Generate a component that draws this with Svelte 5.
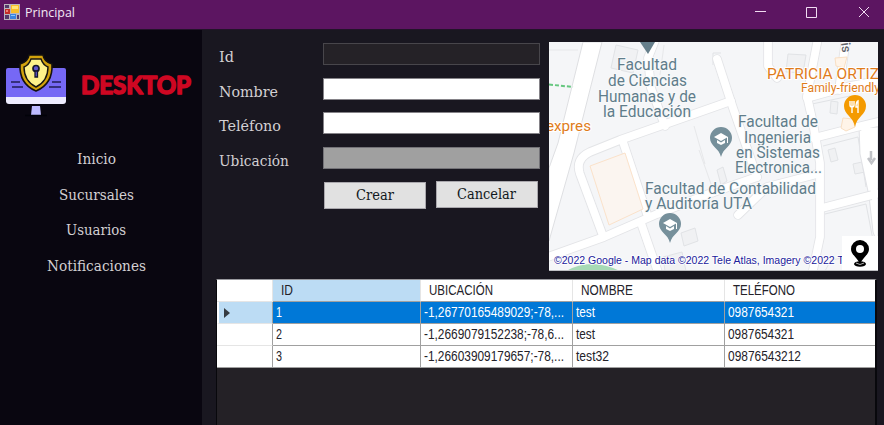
<script>
  const nav = [
    { text: 'Inicio', width: 39 },
    { text: 'Sucursales', width: 75 },
    { text: 'Usuarios', width: 60 },
    { text: 'Notificaciones', width: 99 }
  ];
  const fields = [
    { text: 'Id', width: 15, kind: 'dark' },
    { text: 'Nombre', width: 59, kind: '' },
    { text: 'Teléfono', width: 62, kind: '' },
    { text: 'Ubicación', width: 70, kind: 'gray' }
  ];
  const headers = [
    { text: 'ID', width: 12 },
    { text: 'UBICACIÓN', width: 64 },
    { text: 'NOMBRE', width: 52 },
    { text: 'TELÉFONO', width: 62 }
  ];
  const rows = [
    [['1', 6], ['-1,26770165489029;-78,...', 140], ['test', 19], ['0987654321', 66]],
    [['2', 6], ['-1,2669079152238;-78,6...', 140], ['test', 19], ['0987654321', 66]],
    [['3', 6], ['-1,26603909179657;-78,...', 140], ['test32', 33], ['09876543212', 73]]
  ];
  const roads = [
    'M545 258 L604 237 L657 214 L714 192 L757 177',
    'M603 236 L580 174 Q575 159 590 152 L620 140 L714 107 L731 101',
    'M623 142 L647 214',
    'M641 223 L659 275',
    'M656 38 L648 58 L651 88 L665 126',
    'M717 59 L733 108 L757 177',
    'M738 215 L767 187 L817 174',
    'M768 38 L768 66 L777 78',
    'M818 38 L807 96 L813 123 L820 163 L820 237 L812 275',
    'M807 98 L850 86 L882 80',
    'M846 38 L839 90',
    'M814 138 L857 127 L882 121',
    'M822 208 L880 193'
  ];
  const places = [
    ['Facultad', 617, 70, 60], ['de Ciencias', 608, 85.5, 79],
    ['Humanas y de', 598, 101.5, 98], ['la Educación', 603, 117, 88],
    ['Facultad de', 738, 127, 80], ['Ingenieria', 744, 142.5, 67],
    ['en Sistemas', 736, 158, 84], ['Electronica...', 735, 173, 87],
    ['Facultad de Contabilidad', 645, 193.5, 171], ['y Auditoría UTA', 645, 209, 107]
  ];
</script>

{#snippet fit(text, width, size, height = 20)}
  <svg class="fit" {width} {height}>
    <text x="0" y={height * 0.75} font-size={size} textLength={width} lengthAdjust="spacingAndGlyphs">{text}</text>
  </svg>
{/snippet}

{#snippet pin(x, y)}
  <g transform={`translate(${x} ${y})`}>
    <path d="M0 18 C-2 9 -11 7 -11 -1 A11 11 0 0 1 11 -1 C11 7 2 9 0 18Z" fill="#76909b" />
    <path d="M-7 -2 L0 -6 L7 -2 L0 2Z M-4 1 L0 3.5 L4 1 V4 L0 6 L-4 4Z" fill="white" />
    <path d="M6.5 -2 V4" stroke="white" />
  </g>
{/snippet}

<div class="window">
  <header>
    <svg width="16" height="16" viewBox="0 0 16 16">
      <path d="M0 0H16V16H0Z" fill="#bab5bd" />
      <path d="M1 1H5V4H1Z M1 11H5V15H1Z M13 11H15V15H13Z" fill="#54386a" />
      <path d="M7 1H15V9H7Z" fill="#f7bd29" /><path d="M8 2H14V5H8Z" fill="#ffe477" />
      <path d="M1 5H6V10H1Z" fill="#c32e27" /><path d="M2 6H4V8H2Z" fill="#ee8277" />
      <path d="M6 10H12V15H6Z" fill="#3c83df" /><path d="M7 11H11V12H7Z" fill="#86c5ff" />
    </svg>
    <span class="title">{@render fit('Principal', 50, 13.2)}</span>
    <svg class="controls" width="120" height="14" viewBox="0 0 120 14" fill="none" stroke="#f1dcf2">
      <path d="M1 6.5H12" /><path d="M52.5 2.5H62.5V12.5H52.5Z" /><path d="M105 2L115 12M115 2L105 12" />
    </svg>
  </header>
  <div class="body">
    <aside>
      <div class="brand">
        <svg width="198" height="74" viewBox="0 48 198 74">
          <path d="M8 68H64Q66 68 66 70V97H6V70Q6 68 8 68Z" fill="#7668f5" />
          <path d="M6 97H66V101Q66 104 63 104H9Q6 104 6 101Z" fill="#eeecff" />
          <path d="M32 106H40L41 115H31Z" fill="#bdbaff" />
          <path d="M25 115.5H47" stroke="#020208" stroke-width="1.5" />
          <path d="M11 82H20M12 87H23M52 82H61M49 87H61" stroke="#221c55" stroke-width="1.5" />
          <path d="M29 55H43Q44 62 52 64Q53 84 36 91Q19 84 20 64Q28 62 29 55Z" fill="#d3a20c" stroke="#15120f" stroke-width="1.6" />
          <path d="M31 59H41Q43 65 48 67Q48 81 36 87Q24 81 24 67Q29 65 31 59Z" fill="#fff28b" stroke="#181510" stroke-width="1.4" />
          <circle cx="36" cy="68.5" r="3" fill="#6257cf" stroke="#17172c" stroke-width="1.7" />
          <path d="M35 71V77H37.5V71Z" fill="#6257cf" stroke="#17172c" stroke-width="1.3" />
          <text x="81" y="94" textLength="110" lengthAdjust="spacingAndGlyphs" class="logo">DESKTOP</text>
        </svg>
      </div>
      <nav>
        {#each nav as item}<a href={'#' + item.text}>{@render fit(item.text, item.width, 14)}</a>{/each}
      </nav>
    </aside>
    <main>
      <section class="top">
        <form>
          {#each fields as field}
            <div class="field">
              <span class="label">{@render fit(field.text, field.width, 14)}</span>
              <span class={['input', field.kind]}></span>
            </div>
          {/each}
          <div class="actions">
            <button type="button" class="create">{@render fit('Crear', 38, 14)}</button>
            <button type="button">{@render fit('Cancelar', 59, 14)}</button>
          </div>
        </form>
        <svg class="map" width="329" height="229" viewBox="549 42 329 229">
          <path d="M549 42H878V271H549Z" fill="#f5f6f8" />
          <g fill="#f0f1f3" stroke="#e1e3e6">
            <path d="M616 45L638 50L633 73L611 68Z" /><path d="M788 54L806 55L803 73L786 72Z" />
            <path d="M831 101L838 102L837 114L830 113Z" /><path d="M681 233L695 228L698 241L684 246Z" />
            <path d="M663 257L682 252L686 271H665Z" /><path d="M717 170L723 167L727 181L721 185Z" />
            <path d="M828 150L835 148L838 160L831 162Z" /><path d="M853 164L862 162L865 172L855 174Z" />
            <path d="M721 53H713V65" fill="none" /><path d="M812 104L850 96M823 146L858 137L866 187M825 214L866 204L874 245M825 271L831 260L843 258" fill="none" />
          </g>
          <path d="M583 42H602L574 153L549 241V168L558 143Z" fill="white" stroke="#dedfe2" />
          <path d="M859 127H878V245L873 232L869 196L860 154Z" fill="white" stroke="#e1e2e6" />
          <g fill="none" stroke-linejoin="round" stroke-linecap="round">
            {#each roads as d}<path {d} stroke="#e3e4e7" stroke-width="9.5" />{/each}
            {#each roads as d}<path {d} stroke="white" stroke-width="7.8" />{/each}
          </g>
          <path d="M861 128H877V227L871 194Z" fill="white" />
          <path d="M590 166L625 153L643 209L609 225Z" fill="#fbf5f0" stroke="#fbe2ca" />
          <path d="M835 58L847 57L844 68L836 66Z M843 118L853 119L855 127L846 131L841 128Z" fill="#fff4e8" stroke="#f9dfc3" />
          <path d="M549 84.5L573 87" stroke="#65c77f" stroke-width="2" stroke-dasharray="4 2" />
          <path d="M694 126L705 164M699 150L711 184M664 45L660 75M549 50H578" fill="none" stroke="#e7e8ea" />
          <path d="M566 271Q591 257 620 271Z" fill="#a7dab5" />
          <path d="M640 42H655L648 54Z" fill="#667f8b" />
          {@render pin(721, 139)}
          {@render pin(670, 225)}
          <path d="M855 127C853 116 844 115 844 106A11 11 0 0 1 866 106C866 115 857 116 855 127Z" fill="#f49a00" />
          <path d="M850 101V105Q850 107 852 107V113M852 101V107M854 101V105Q854 107 852 107M858 113V101Q856 102 856 107H858" stroke="white" stroke-width="1.4" fill="none" />
          <g class="places">
            {#each places as [text, x, y, width]}
              <text {x} {y} textLength={width} lengthAdjust="spacingAndGlyphs">{text}</text>
            {/each}
          </g>
          <g class="food">
            <text x="546" y="130.5" font-size="14.5" textLength="45" lengthAdjust="spacingAndGlyphs">expres</text>
            <text x="767" y="79" font-size="15.5" textLength="112" lengthAdjust="spacingAndGlyphs">PATRICIA ORTIZ</text>
            <text x="801" y="92" font-size="12.5" textLength="79" lengthAdjust="spacingAndGlyphs">Family-friendly</text>
          </g>
          <text x="841" y="43" transform="rotate(83 841 43)" font-size="13" font-weight="500" fill="#626469" font-family="Roboto">is</text>
          <path d="M871 151V160M868 158L871.5 163L875 158" stroke="#c0c2c7" stroke-width="2.5" fill="none" />
          <text x="554" y="264" font-size="10.4" textLength="298" lengthAdjust="spacingAndGlyphs" class="copyright">©2022 Google - Map data ©2022 Tele Atlas, Imagery ©2022 Ter</text>
          <path d="M842 236H878V271H842Z" fill="white" />
          <ellipse cx="860" cy="264" rx="6" ry="2.8" />
          <path d="M860 264C858 258 851 255 851 249A9 9 0 0 1 869 249C869 255 862 258 860 264Z" />
          <circle cx="860" cy="249" r="4" fill="white" />
          <path d="M856 263Q860 266 864 263" stroke="white" stroke-width=".7" fill="none" />
          <path d="M549 270.5H878" stroke="#bfc0c4" />
        </svg>
      </section>
      <section class="grid">
        <div class="row head">
          <span class="cell marker"></span>
          {#each headers as header, i}<span class={['cell', { chosen: i === 0 }]}>{@render fit(header.text, header.width, 14)}</span>{/each}
        </div>
        {#each rows as row, i}
          <div class={['row', { selected: i === 0 }]}>
            <span class="cell marker">{#if i === 0}<svg width="6" height="10"><path d="M0 0L6 5L0 10Z" fill="#353b41" /></svg>{/if}</span>
            {#each row as [text, width]}<span class="cell">{@render fit(text, width, 14)}</span>{/each}
          </div>
        {/each}
      </section>
    </main>
  </div>
</div>

<style>
  * { box-sizing: border-box; }
  .window { width: 884px; height: 425px; overflow: hidden; display: flex; flex-direction: column; background: #191720; font-family: Roboto, sans-serif; }
  svg { display: block; flex: none; }
  .fit { overflow: visible; }
  .fit text { fill: currentColor; }
  header { height: 29px; flex: none; background: #5c1561; display: flex; align-items: flex-start; padding: 4px 11px 0 4px; }
  .title { margin: -2px 0 0 5px; color: #f3e8f4; font-family: "Open Sans", sans-serif; }
  .controls { margin: 1px 0 0 auto; transform: translateX(1px); }
  .body { flex: 1; display: flex; border-top: 1px solid #221329; }
  aside { width: 202px; background: #090610; flex: none; }
  .brand { height: 74px; margin-top: 18px; }
  .logo { font-family: Lato, sans-serif; font-weight: 700; font-size: 25.5px; fill: #ce0722; stroke: #ce0722; stroke-width: 1.7; stroke-linejoin: round; }
  nav { margin-top: 27px; padding-right: 10px; display: flex; flex-direction: column; gap: 15.7px; align-items: center; }
  nav a { color: #d3d0d3; text-decoration: none; font-family: "DejaVu Serif", serif; }
  main { flex: 1; padding: 12px 6px 0 14px; display: flex; flex-direction: column; }
  .top { height: 237px; flex: none; display: flex; justify-content: space-between; }
  form { padding: 1px 0 0 3px; width: 324px; color: #d3d0d3; font-family: "DejaVu Serif", serif; }
  .field { display: flex; justify-content: space-between; height: 34.6px; }
  .label { margin-top: 4px; }
  .input { width: 217px; height: 22px; background: white; border: 1px solid #858388; }
  .dark { background: #252227; border-color: #48464b; }
  .gray { background: #a0a0a0; border-color: #747378; }
  .actions { display: flex; justify-content: flex-end; gap: 10px; padding: 0 2px 0 0; margin-top: -.4px; }
  button { width: 102px; height: 27px; display: grid; place-items: center; background: #e1e1e1; border: 1px solid #aaa8ad; padding: 0 2px 0 0; color: #111820; font-family: inherit; }
  .create { margin-top: 1px; padding-right: 0; }
  .map { overflow: hidden; }
  .places { font-family: Roboto, sans-serif; font-size: 15.8px; fill: #607d8b; paint-order: stroke; stroke: #f8f9fa; stroke-width: 2; }
  .food { font-family: Roboto, sans-serif; fill: #df7c1b; paint-order: stroke; stroke: white; stroke-width: 2; }
  .copyright { font-family: "Liberation Sans", sans-serif; fill: #20209b; paint-order: stroke; stroke: white; stroke-width: 1.5; }
  .grid { flex: 1; width: 661px; background: #242126; border: 1px solid #08080c; border-top-color: #99999e; border-bottom: 0; border-right-width: 2px; font-family: "Liberation Sans", sans-serif; }
  .row { display: grid; grid-template-columns: 56px 148px 152px 152px 1fr; height: 22px; background: white; color: #242229; }
  .cell { border-right: 1px solid #a0a0a0; border-bottom: 1px solid #a0a0a0; padding: 0 0 0 3px; min-width: 0; }
  .cell:last-child { border-right: 0; }
  .marker { padding: 6px 0 0 7px; border-bottom-color: #e5e5e5; }
  .head .cell { border-right-color: #e5e5e5; padding-left: 8px; }
  .head .chosen, .selected .marker { background: #bcdcf4; }
  .selected { background: #0078d7; color: white; }
  .selected .marker { border-left: 2px solid white; padding-left: 5px; }
  .row:last-child .cell { border-bottom-color: #a0a0a0; }
</style>
